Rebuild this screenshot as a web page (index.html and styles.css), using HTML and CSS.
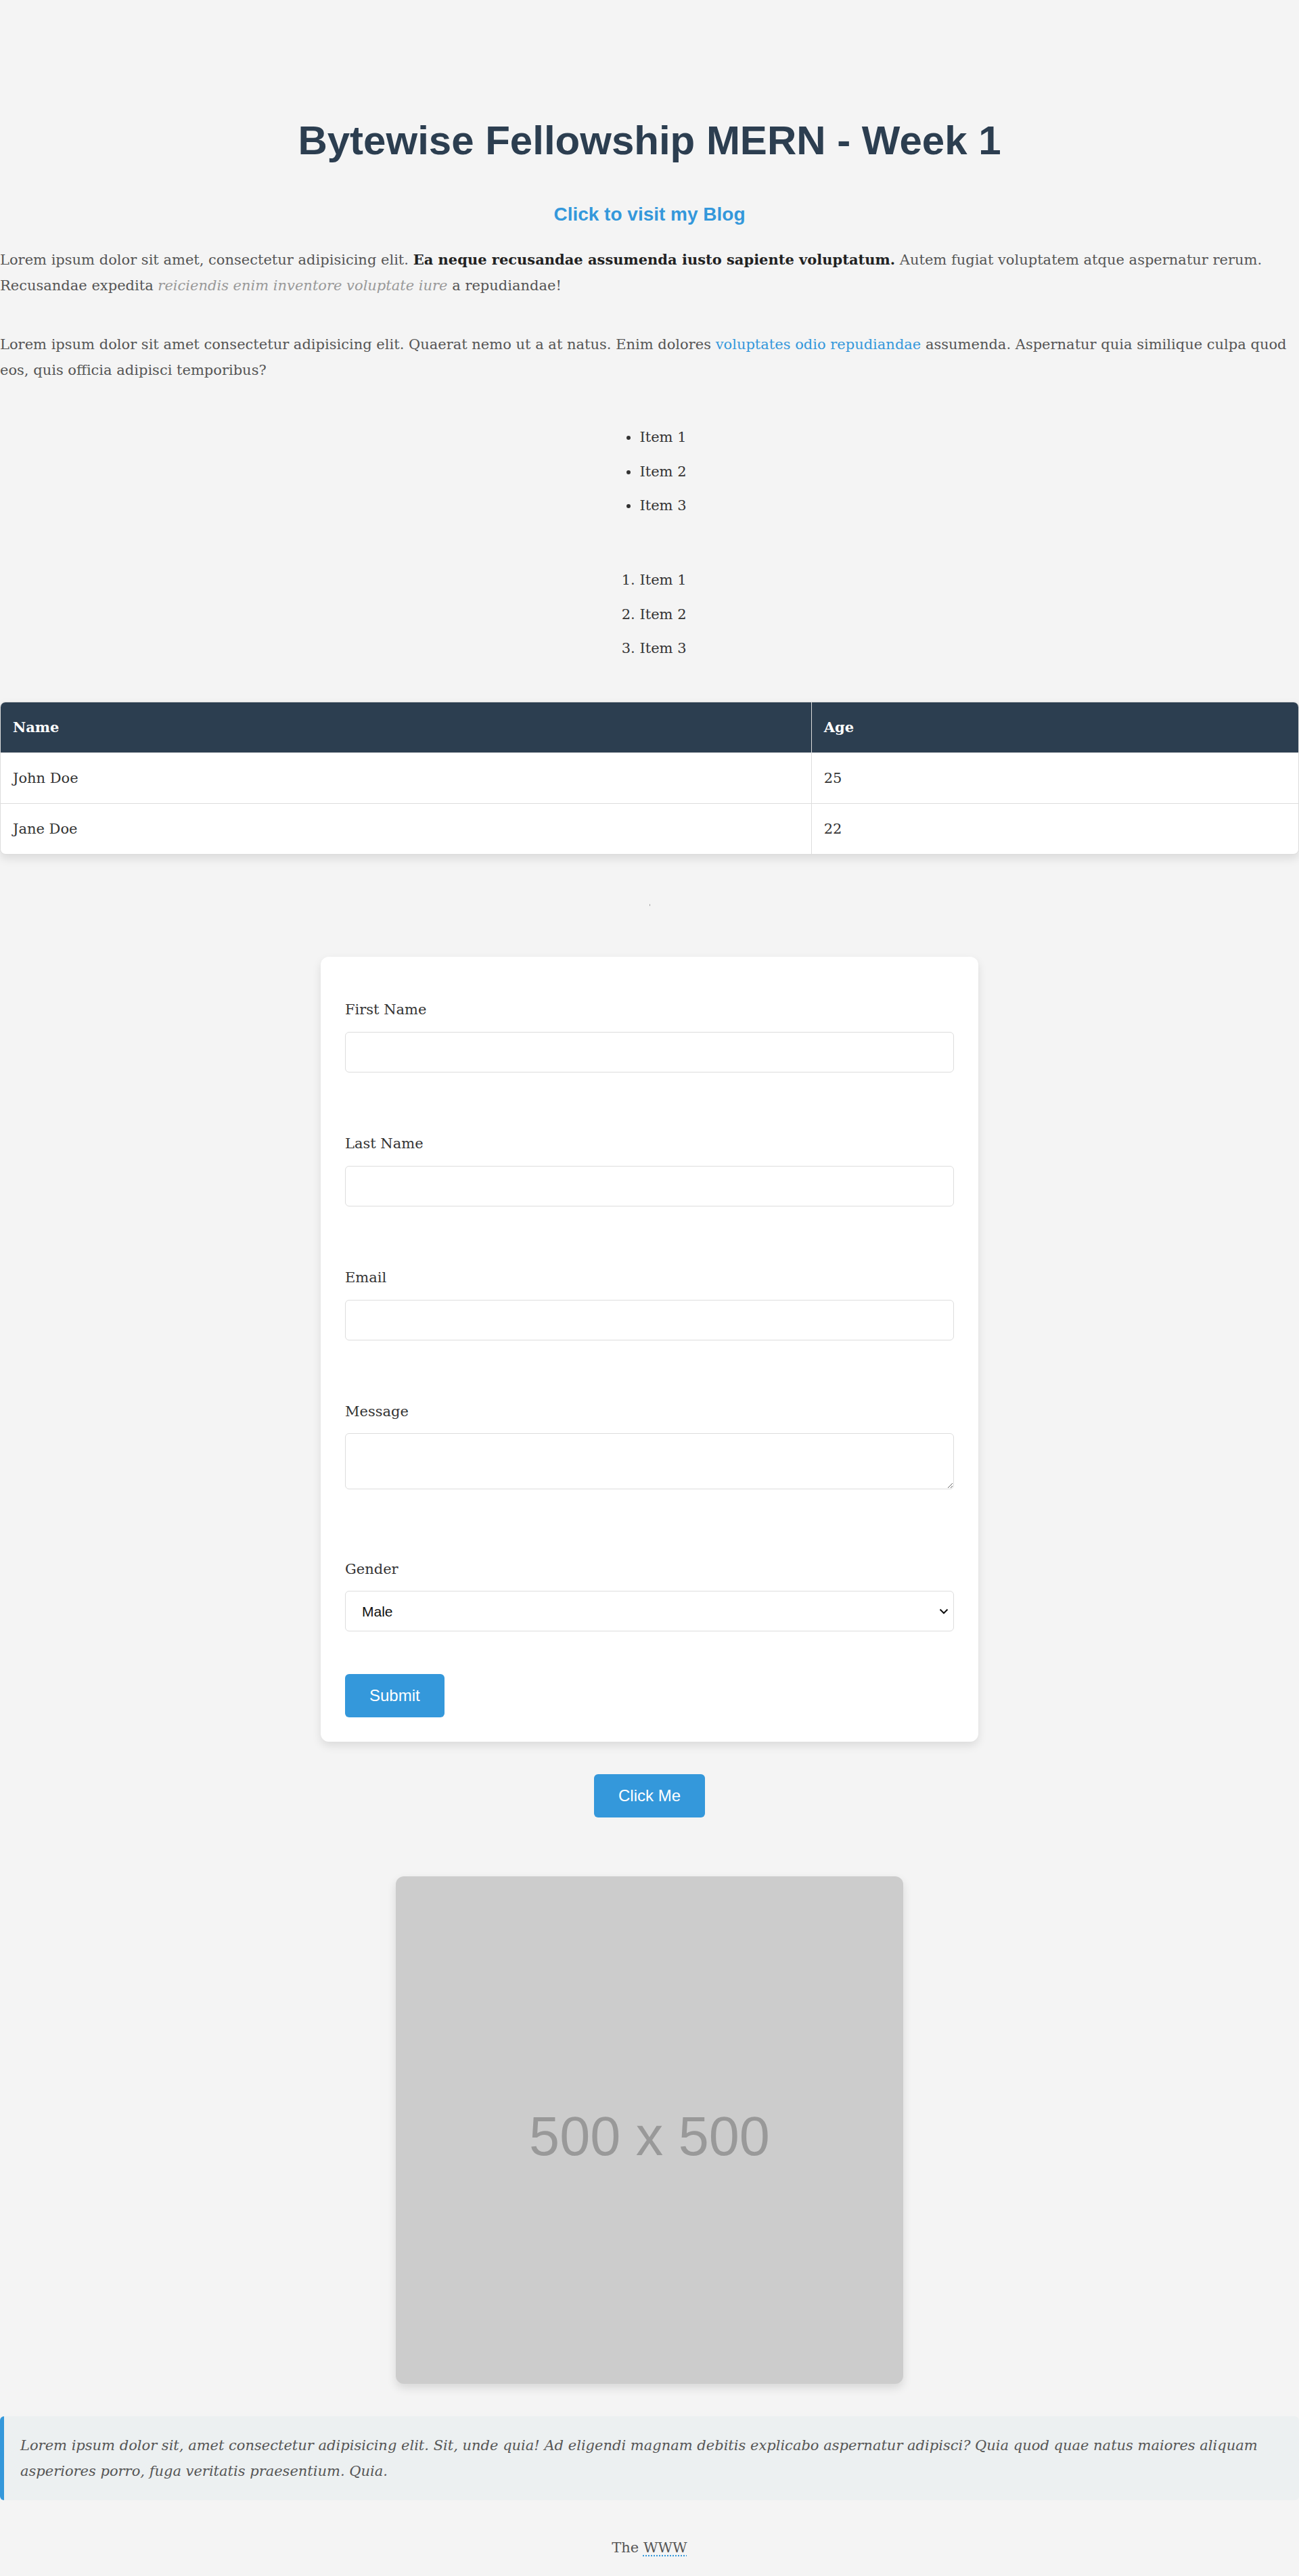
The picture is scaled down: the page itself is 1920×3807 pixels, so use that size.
FILE: index.html
```html
<!DOCTYPE html>
<html lang="en">
<head>
<meta charset="utf-8">
<title>Bytewise Fellowship MERN - Week 1</title>
<link rel="stylesheet" href="styles.css">
</head>
<body>
<header class="hero">
  <h1 class="title">Bytewise Fellowship MERN - Week 1</h1>
  <a class="blog-link" href="#">Click to visit my Blog</a>
</header>
<main class="content">
  <p class="para para-first">Lorem ipsum dolor sit amet, consectetur adipisicing elit. <strong class="strong">Ea neque recusandae assumenda iusto sapiente voluptatum.</strong> Autem fugiat voluptatem atque aspernatur rerum. Recusandae expedita <em class="muted">reiciendis enim inventore voluptate iure</em> a repudiandae!</p>
  <p class="para para-second">Lorem ipsum dolor sit amet consectetur adipisicing elit. Quaerat nemo ut a at natus. Enim dolores <a class="inline-link" href="#">voluptates odio repudiandae</a> assumenda. Aspernatur quia similique culpa quod eos, quis officia adipisci temporibus?</p>

  <ul class="list list-ul">
    <li>Item 1</li>
    <li>Item 2</li>
    <li>Item 3</li>
  </ul>
  <ol class="list list-ol">
    <li>Item 1</li>
    <li>Item 2</li>
    <li>Item 3</li>
  </ol>

  <div class="table-wrap">
    <table class="data-table">
      <thead>
        <tr><th class="col-name">Name</th><th>Age</th></tr>
      </thead>
      <tbody>
        <tr><td class="col-name">John Doe</td><td>25</td></tr>
        <tr><td class="col-name">Jane Doe</td><td>22</td></tr>
      </tbody>
    </table>
  </div>

  <div class="tiny-mark"></div>

  <form class="form-card">
    <div class="field">
      <label class="label" for="first">First Name</label>
      <input class="control" id="first" type="text">
    </div>
    <div class="field">
      <label class="label" for="last">Last Name</label>
      <input class="control" id="last" type="text">
    </div>
    <div class="field">
      <label class="label" for="email">Email</label>
      <input class="control" id="email" type="email">
    </div>
    <div class="field">
      <label class="label" for="msg">Message</label>
      <textarea class="control control-area" id="msg"></textarea>
    </div>
    <div class="field field-gender">
      <label class="label" for="gender">Gender</label>
      <div class="select-wrap">
        <select class="control control-select" id="gender">
          <option>Male</option>
          <option>Female</option>
        </select>
        <svg class="chevron" width="14" height="9" viewBox="0 0 14 9"><path d="M1.5 1.5 L7 7 L12.5 1.5" fill="none" stroke="#111" stroke-width="2"/></svg>
      </div>
    </div>
    <button class="btn btn-submit" type="button">Submit</button>
  </form>

  <button class="btn btn-click" type="button">Click Me</button>

  <div class="placeholder">500 x 500</div>

  <blockquote class="quote">Lorem ipsum dolor sit, amet consectetur adipisicing elit. Sit, unde quia! Ad eligendi magnam debitis explicabo aspernatur adipisci? Quia quod quae natus maiores aliquam asperiores porro, fuga veritatis praesentium. Quia.</blockquote>

  <footer class="footer">The <abbr class="abbr" title="World Wide Web">WWW</abbr></footer>
</main>
</body>
</html>
```
FILE: styles.css
```css
html {
  background: #f4f4f4;
}

body {
  margin: 0;
  background: #f4f4f4;
  font-family: "DejaVu Serif", Georgia, serif;
  font-size: 21px;
  line-height: 38.4px;
  color: #555;
}

.hero {
  padding-top: 173px;
  text-align: center;
}

.title {
  margin: 0;
  font-family: "Liberation Sans", Arial, sans-serif;
  font-weight: 700;
  font-size: 60px;
  line-height: 69px;
  color: #2c3e50;
}

.blog-link {
  display: block;
  width: fit-content;
  margin: 59px auto 0;
  font-family: "Liberation Sans", Arial, sans-serif;
  font-weight: 700;
  font-size: 28px;
  line-height: 32px;
  color: #3498db;
  text-decoration: none;
}

.para {
  margin: 0;
}

.para-first {
  margin-top: 32px;
}

.para-second {
  margin-top: 48px;
}

.strong {
  color: #222;
  font-weight: 700;
}

.muted {
  color: #999;
  font-style: italic;
}

.inline-link {
  color: #3498db;
  text-decoration: none;
}

.list {
  width: fit-content;
  margin: 0 auto;
  padding-left: 40px;
  color: #333;
}

.list li + li {
  margin-top: 12px;
}

.list-ul {
  margin-top: 60.5px;
}

.list-ol {
  margin-top: 72px;
}

.table-wrap {
  margin-top: 59.3px;
  background: #fff;
  border: 1px solid #ddd;
  border-radius: 8px;
  overflow: hidden;
  box-shadow: 0 6px 14px rgba(0, 0, 0, 0.1);
}

.data-table {
  width: 100%;
  border-collapse: separate;
  border-spacing: 0;
  color: #333;
}

.data-table th,
.data-table td {
  padding: 18px;
  line-height: 38px;
  text-align: left;
  border-bottom: 1px solid #ddd;
}

.data-table tbody tr:last-child td {
  border-bottom: none;
}

.data-table th {
  background: #2c3e50;
  color: #fff;
  font-weight: 700;
}

.data-table .col-name {
  width: 62.5%;
  border-right: 1px solid #ddd;
}

.tiny-mark {
  width: 1px;
  height: 3px;
  margin: 73px auto 0;
  background: #aaa;
}

.form-card {
  width: 972px;
  box-sizing: border-box;
  margin: 75px auto 0;
  padding: 36px;
  background: #fff;
  border-radius: 12px;
  box-shadow: 0 6px 14px rgba(0, 0, 0, 0.1);
}

.field {
  margin-top: 86.5px;
}

.field:first-child {
  margin-top: 23.5px;
}

.field-gender {
  margin-top: 98.5px;
}

.label {
  display: block;
  color: #333;
}

.control {
  display: block;
  width: 100%;
  box-sizing: border-box;
  height: 60px;
  margin: 13px 0 0;
  padding: 0 18px;
  border: 1px solid #ddd;
  border-radius: 6px;
  background: #fff;
  font-family: "Liberation Sans", Arial, sans-serif;
  font-size: 20px;
  color: #111;
}

.control-area {
  height: 83px;
  padding: 12px 18px;
}

.select-wrap {
  position: relative;
  padding-top: 13px;
}

.control-select {
  -webkit-appearance: none;
  appearance: none;
  margin: 0;
  padding: 0 24px;
  font-size: 21px;
}

.chevron {
  position: absolute;
  right: 8px;
  top: 38.5px;
}

.btn {
  display: block;
  padding: 18px 36px;
  border: none;
  border-radius: 6px;
  background: #3498db;
  color: #fff;
  font-family: "Liberation Sans", Arial, sans-serif;
  font-size: 24px;
  line-height: 27.6px;
}

.btn-submit {
  margin-top: 63px;
}

.btn-click {
  margin: 48px auto 0;
}

.placeholder {
  width: 750px;
  height: 750px;
  box-sizing: border-box;
  margin: 87.4px auto 0;
  padding-top: 18px;
  display: flex;
  align-items: center;
  justify-content: center;
  background: #ccc;
  color: #999;
  font-family: "Liberation Sans", Arial, sans-serif;
  font-size: 81px;
  border-radius: 12px;
  box-shadow: 0 6px 14px rgba(0, 0, 0, 0.12);
}

.quote {
  margin: 47.6px 0 0;
  padding: 24px;
  border-left: 6px solid #3498db;
  border-radius: 6px;
  background: #ecf0f1;
  font-style: italic;
  color: #555;
}

.footer {
  margin-top: 50.5px;
  padding-bottom: 25px;
  text-align: center;
  color: #555;
}

.abbr {
  text-decoration: underline dotted #3498db;
  text-underline-offset: 5px;
}
```
